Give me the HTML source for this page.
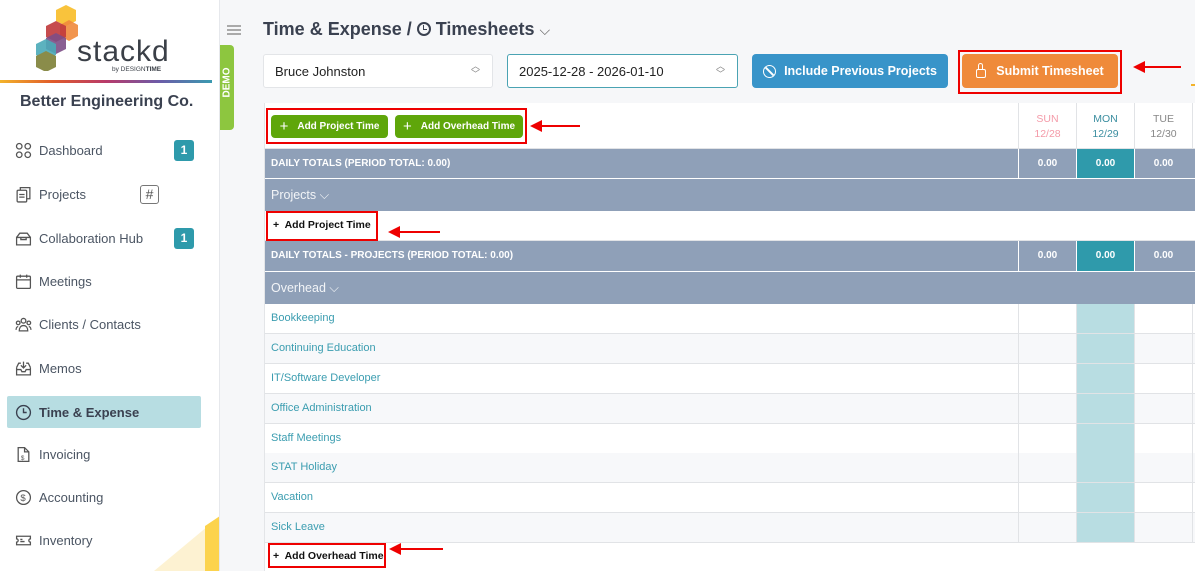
<!DOCTYPE html>
<html><head><meta charset="utf-8"><style>
*{box-sizing:border-box;margin:0;padding:0}
body{width:1195px;height:571px;overflow:hidden;font-family:"Liberation Sans",Arial,sans-serif;background:#f6f7f9;position:relative}
.sb{position:absolute;left:0;top:0;width:220px;height:571px;background:#fff;border-right:1px solid #e6e8ec;overflow:hidden}
.nav{position:absolute;left:0;width:220px;height:32px;display:flex;align-items:center;font-size:13px;color:#4b5563}
.nav svg{position:absolute;left:15px;width:17px;height:17px}
.nav span{position:absolute;left:39px}
.badge{position:absolute;left:174px;width:20px;height:21px;background:#2e9aab;color:#fff;font-weight:bold;font-size:12px;border-radius:3px;text-align:center;line-height:21px}
.tbl{position:absolute;left:264px;top:103px;width:931px;height:468px;background:#fff;border-left:1px solid #e3e5e8}
.row{position:absolute;left:0;width:931px}
.gray{background:#8fa0b8;color:#fff;font-weight:bold;font-size:10px}
.cell{position:absolute;top:0;height:100%;border-left:1px solid #e1e3e6}
.lnk{color:#3b9db0;font-size:11px;position:absolute;left:6px}
.btn{position:absolute;border-radius:4px;color:#fff;font-weight:bold;font-size:12.5px;display:flex;align-items:center;justify-content:center}
.red{position:absolute;border:2px solid #e00}
.arr{position:absolute;height:2px;background:#e00}
.arr:before{content:"";position:absolute;left:-10px;top:-5px;border-right:12px solid #e00;border-top:6px solid transparent;border-bottom:6px solid transparent}
</style></head><body>
<div class="sb">
 <svg style="position:absolute;left:36px;top:3px" width="44" height="68" viewBox="0 0 44 68">
  <polygon points="30,2 40,7 40,18 30,23 20,18 20,7" fill="#f9c33c"/>
  <polygon points="33,17 42,22 42,33 33,38 24,33 24,22" fill="#f08a3c" opacity=".9"/>
  <polygon points="20,18 30,23 30,34 20,39 10,34 10,23" fill="#c0393b" opacity=".9"/>
  <polygon points="20,30 30,35 30,46 20,51 10,46 10,35" fill="#7d4e86" opacity=".9"/>
  <polygon points="10,36 20,41 20,52 10,57 0,52 0,41" fill="#4aaab8" opacity=".9"/>
  <polygon points="10,48 20,53 20,64 10,69 0,64 0,53" fill="#8a8c4a"/>
 </svg>
 <div style="position:absolute;left:77px;top:35px;font-size:30px;color:#3a3f47;letter-spacing:1px">stackd</div>
 <div style="position:absolute;left:112px;top:66px;font-size:6.5px;color:#3a3f47">by DESIGN<b>TIME</b></div>
 <div style="position:absolute;left:0;top:80px;width:212px;height:3px;background:linear-gradient(90deg,#f3b32a,#e05a2a,#b83a6a,#6c5ba8,#3a9ab0)"></div>
 <div style="position:absolute;left:20px;top:93px;font-size:16px;font-weight:bold;color:#3a4150">Better Engineering Co.</div>

 <div class="nav" style="top:134px"><svg viewBox="0 0 16 16" fill="none" stroke="#555" stroke-width="1.2"><circle cx="4" cy="4" r="2.6"/><circle cx="12" cy="4" r="2.6"/><circle cx="4" cy="12" r="2.6"/><circle cx="12" cy="12" r="2.6"/></svg><span>Dashboard</span><div class="badge" style="top:6px">1</div></div>
 <div class="nav" style="top:178px"><svg viewBox="0 0 16 16" fill="none" stroke="#555" stroke-width="1.2"><rect x="2" y="4" width="9" height="11" rx="1"/><path d="M5 4V1.5h9V12h-3M4 8h5M4 10.5h5"/></svg><span>Projects</span><div style="position:absolute;left:140px;top:7px;width:19px;height:19px;border:1px solid #777;border-radius:3px;text-align:center;font-size:14px;line-height:17px;color:#555">#</div></div>
 <div class="nav" style="top:222px"><svg viewBox="0 0 16 16" fill="none" stroke="#555" stroke-width="1.2"><path d="M1.5 7h13v7h-13zM1.5 7l3-4h7l3 4M5.5 7v2h5V7"/></svg><span>Collaboration Hub</span><div class="badge" style="top:6px">1</div></div>
 <div class="nav" style="top:265px"><svg viewBox="0 0 16 16" fill="none" stroke="#555" stroke-width="1.2"><rect x="1.5" y="3" width="13" height="11.5" rx="1"/><path d="M1.5 6.5h13M5 1.5v3M11 1.5v3"/></svg><span>Meetings</span></div>
 <div class="nav" style="top:308px"><svg viewBox="0 0 16 16" fill="none" stroke="#555" stroke-width="1.2"><circle cx="8" cy="4.5" r="2.2"/><circle cx="3" cy="6.5" r="1.7"/><circle cx="13" cy="6.5" r="1.7"/><path d="M4 14c0-3 1.5-5 4-5s4 2 4 5zM1 13c0-2 1-3 2-3M15 13c0-2-1-3-2-3"/></svg><span>Clients / Contacts</span></div>
 <div class="nav" style="top:352px"><svg viewBox="0 0 16 16" fill="none" stroke="#555" stroke-width="1.2"><path d="M1.5 7v7h13V7M1.5 7l2-4h2M14.5 7l-2-4h-2M1.5 9h4l1 2h3l1-2h4M8 1.5v6M5.5 5l2.5 2.5 2.5-2.5"/></svg><span>Memos</span></div>
 <div style="position:absolute;left:7px;top:396px;width:194px;height:32px;background:#b7dde2;border-radius:2px"></div>
 <div class="nav" style="top:396px;font-weight:bold;color:#3a4150"><svg viewBox="0 0 16 16" fill="none" stroke="#3a4150" stroke-width="1.3"><circle cx="8" cy="8" r="6.5"/><path d="M8 4v4h3"/></svg><span>Time &amp; Expense</span></div>
 <div class="nav" style="top:438px"><svg viewBox="0 0 16 16" fill="none" stroke="#555" stroke-width="1.2"><path d="M3 1.5h6l4 4v9H3zM9 1.5v4h4"/><text x="5.5" y="13" font-size="6" fill="#555" stroke="none">$</text></svg><span>Invoicing</span></div>
 <div class="nav" style="top:481px"><svg viewBox="0 0 16 16" fill="none" stroke="#555" stroke-width="1.2"><circle cx="8" cy="8" r="6.5"/><text x="5" y="11.5" font-size="9" fill="#555" stroke="none">$</text></svg><span>Accounting</span></div>
 <div class="nav" style="top:524px"><svg viewBox="0 0 16 16" fill="none" stroke="#555" stroke-width="1.2"><path d="M1.5 4h13v2.5a1.5 1.5 0 0 0 0 3V12h-13V9.5a1.5 1.5 0 0 0 0-3zM5 9h4M5 7h2"/></svg><span>Inventory</span></div>
 <div style="position:absolute;left:148px;top:516px;width:72px;height:60px;background:#fdf2d2;clip-path:polygon(0 60px,72px 0,72px 60px)"></div>
 <div style="position:absolute;left:205px;top:516px;width:15px;height:60px;background:#fcd34d;clip-path:polygon(0 10px,15px 0,15px 60px,0 60px)"></div>
</div>
<div style="position:absolute;left:227px;top:25px;width:14px;height:10px;border-top:2px solid #aaa;border-bottom:2px solid #aaa"><div style="margin-top:2px;height:2px;background:#aaa"></div></div>
<div style="position:absolute;left:220px;top:45px;width:14px;height:85px;background:#8dc63f;border-radius:0 4px 4px 0"><div style="position:absolute;left:-10px;top:30px;transform:rotate(-90deg);color:#fff;font-size:10px;font-weight:bold;width:34px">DEMO</div></div>

<div style="position:absolute;left:263px;top:19px;font-size:18px;font-weight:bold;color:#3a4150">Time &amp; Expense / <span style="display:inline-block;width:14px;height:14px;border:2px solid #3a4150;border-radius:50%;vertical-align:-1px;position:relative"><span style="position:absolute;left:4px;top:1px;width:4px;height:5px;border-left:1.5px solid #3a4150;border-bottom:1.5px solid #3a4150"></span></span> Timesheets <span style="font-weight:normal;font-size:14px;color:#666">⌵</span></div>

<div style="position:absolute;left:263px;top:54px;width:230px;height:34px;background:#fff;border:1px solid #e3e5e8;border-radius:3px;font-size:13px;color:#222;padding:9px 11px">Bruce Johnston<span style="position:absolute;right:12px;top:7px;font-size:9px;color:#888;line-height:8px">︿<br>﹀</span></div>
<div style="position:absolute;left:507px;top:54px;width:231px;height:34px;background:#fff;border:1px solid #4aa3b3;border-radius:3px;font-size:13px;color:#222;padding:9px 11px">2025-12-28 - 2026-01-10<span style="position:absolute;right:12px;top:7px;font-size:9px;color:#888;line-height:8px">︿<br>﹀</span></div>
<div class="btn" style="left:752px;top:54px;width:196px;height:34px;background:#3894c9"><span style="display:inline-block;width:13px;height:13px;border:1.5px solid #fff;border-radius:50%;margin-right:8px;position:relative;overflow:hidden"><span style="position:absolute;left:4.5px;top:-2px;width:1.5px;height:16px;background:#fff;transform:rotate(-45deg)"></span></span>Include Previous Projects</div>
<div class="red" style="left:958px;top:50px;width:164px;height:44px"></div>
<div class="btn" style="left:962px;top:54px;width:156px;height:34px;background:#ef8a3a"><span style="display:inline-block;width:10px;height:9px;border:1.5px solid #fff;border-radius:2px;margin-right:10px;position:relative;top:2px"><span style="position:absolute;left:1px;top:-7px;width:5px;height:6px;border:1.5px solid #fff;border-bottom:none;border-radius:3px 3px 0 0"></span></span>Submit Timesheet</div>
<div class="arr" style="left:1143px;top:66px;width:38px"></div>
<div style="position:absolute;left:1191px;top:84px;width:4px;height:2px;background:#f3b32a"></div>

<div class="tbl">
 <div class="row" style="top:0;height:46px;border-bottom:1px solid #e1e3e6">
  <div class="cell" style="left:753px;width:58px;text-align:center;font-size:10.5px;color:#f49aa8;padding-top:9px;line-height:15px">SUN<br>12/28</div>
  <div class="cell" style="left:811px;width:58px;text-align:center;font-size:10.5px;color:#3b8ea0;padding-top:9px;line-height:15px">MON<br>12/29</div>
  <div class="cell" style="left:869px;width:58px;text-align:center;font-size:10.5px;color:#888;padding-top:9px;line-height:15px">TUE<br>12/30</div>
  <div class="cell" style="left:927px;width:4px"></div>
 </div>
 <div class="row gray" style="top:46px;height:29px;line-height:29px"><span style="padding-left:6px">DAILY TOTALS (PERIOD TOTAL: 0.00)</span>
  <div class="cell" style="left:753px;width:58px;text-align:center;border-color:#fff">0.00</div>
  <div class="cell" style="left:811px;width:58px;text-align:center;background:#2f9aab;border-color:#fff">0.00</div>
  <div class="cell" style="left:869px;width:58px;text-align:center;border-color:#fff">0.00</div></div>
 <div class="row gray" style="top:76px;height:32px;line-height:32px;font-weight:normal;font-size:12.5px;color:#f2f4f7"><span style="padding-left:6px">Projects ⌵</span></div>
 <div class="row" style="top:108px;height:30px;border-bottom:1px solid #e1e3e6"><span style="position:absolute;left:8px;top:8px;font-size:10.5px;font-weight:bold;color:#111">+&nbsp; Add Project Time</span></div>
 <div class="row gray" style="top:138px;height:30px;line-height:30px"><span style="padding-left:6px">DAILY TOTALS - PROJECTS (PERIOD TOTAL: 0.00)</span>
  <div class="cell" style="left:753px;width:58px;text-align:center;border-color:#fff">0.00</div>
  <div class="cell" style="left:811px;width:58px;text-align:center;background:#2f9aab;border-color:#fff">0.00</div>
  <div class="cell" style="left:869px;width:58px;text-align:center;border-color:#fff">0.00</div></div>
 <div class="row gray" style="top:169px;height:32px;line-height:32px;font-weight:normal;font-size:12.5px;color:#f2f4f7"><span style="padding-left:6px">Overhead ⌵</span></div>
 <div id="rows"></div>
 <div style="position:absolute;left:8px;top:447px;font-size:10.5px;font-weight:bold;color:#111">+&nbsp; Add Overhead Time</div>
</div>
<script>
var n=["Bookkeeping","Continuing Education","IT/Software Developer","Office Administration","Staff Meetings","STAT Holiday","Vacation","Sick Leave"],h="";
n.forEach(function(t,i){var y=201+i*30-(i>4?1:0);h+='<div class="row" style="top:'+y+'px;height:30px;border-bottom:1px solid #e1e3e6;background:'+(i%2?'#f7f8fa':'#fff')+'"><span class="lnk" style="top:8px">'+t+'</span><div class="cell" style="left:753px;width:58px"></div><div class="cell" style="left:811px;width:58px;background:#b8dde2"></div><div class="cell" style="left:869px;width:58px"></div><div class="cell" style="left:927px;width:4px"></div></div>'});
document.getElementById("rows").outerHTML=h;
</script>
<div class="red" style="left:266px;top:108px;width:261px;height:36px"></div>
<div class="btn" style="left:271px;top:115px;width:117px;height:23px;background:#5fa60a;font-size:10px"><span style="font-weight:normal;font-size:15px;margin-right:9px">+</span>Add Project Time</div>
<div class="btn" style="left:395px;top:115px;width:128px;height:23px;background:#5fa60a;font-size:10px"><span style="font-weight:normal;font-size:15px;margin-right:9px">+</span>Add Overhead Time</div>
<div class="arr" style="left:540px;top:125px;width:40px"></div>
<div class="red" style="left:266px;top:211px;width:112px;height:30px"></div>
<div class="arr" style="left:398px;top:231px;width:42px"></div>
<div class="red" style="left:268px;top:543px;width:118px;height:25px"></div>
<div class="arr" style="left:399px;top:548px;width:44px"></div>
</body></html>
